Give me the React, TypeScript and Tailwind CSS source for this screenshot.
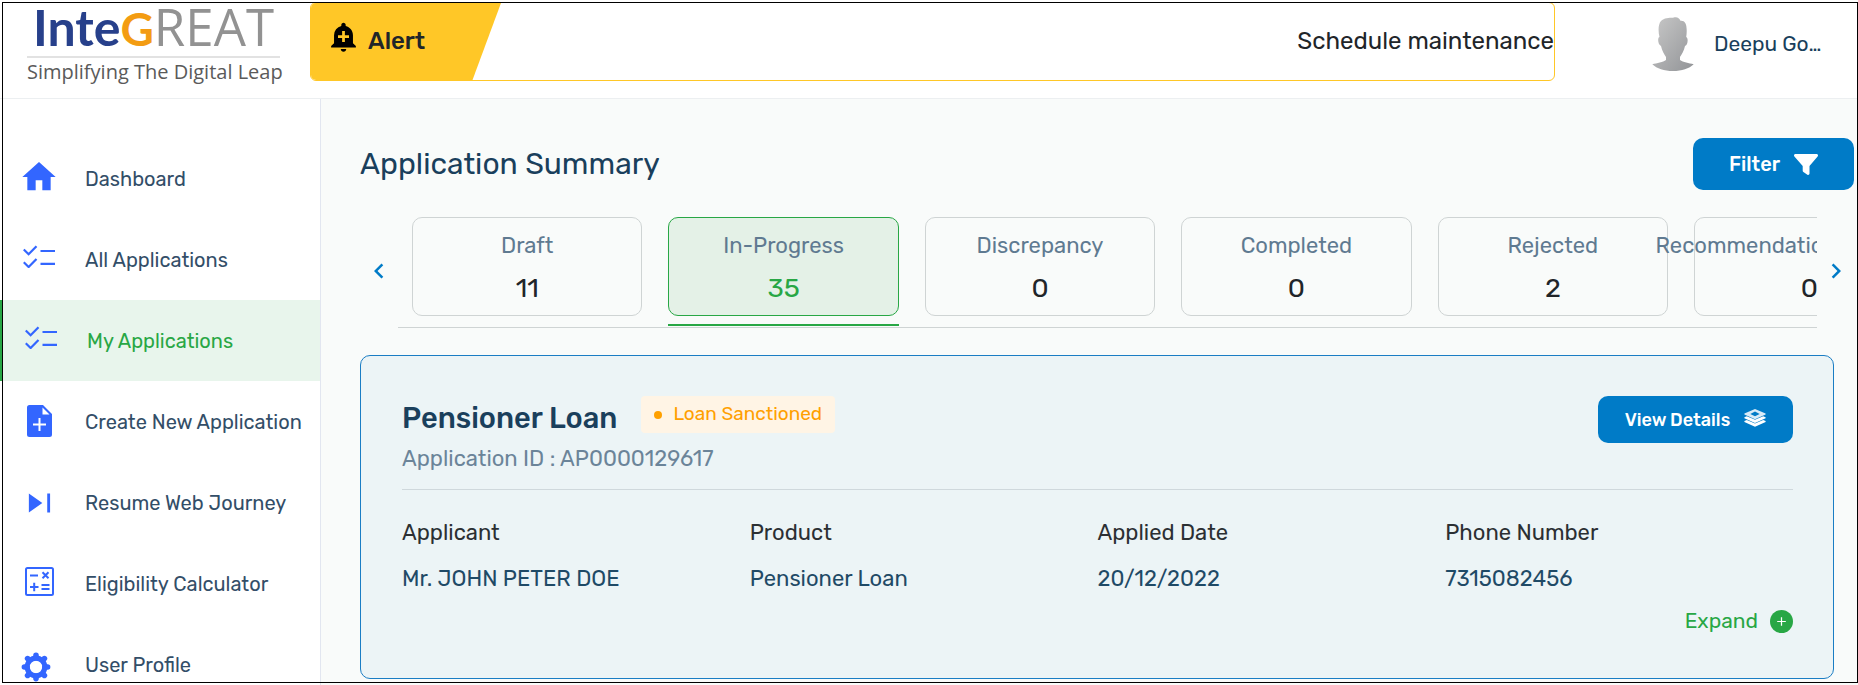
import type { ReactNode } from "react";
import { MdAddAlert, MdChevronLeft, MdChevronRight, MdHome } from "react-icons/md";

function ChecklistIcon() {
  return (
    <svg viewBox="0 0 32 23" className="mb-1.5 h-[23px] w-8" fill="none" stroke="currentColor" strokeWidth="2.2" aria-hidden="true">
      <path d="M.8 4.500L5.600 9.200 13.500 1.200M17.500 6H32M.8 17.300L5.600 22 13.500 14M17.500 18.800H32" />
    </svg>
  );
}

function NewFileIcon() {
  return (
    <svg viewBox="0 0 25 32" className="mb-0.5 h-8 w-[25px]" aria-hidden="true">
      <path fill="currentColor" d="M2.500 0H16l9 9v20.500a2.500 2.500 0 0 1-2.500 2.500h-20A2.500 2.500 0 0 1 0 29.500v-27A2.500 2.500 0 0 1 2.500 0z" />
      <path fill="#fff" d="M15.500 2.500v7H22.500z" />
      <path stroke="#fff" strokeWidth="2" d="M12.500 13v13M6 19.500h13" />
    </svg>
  );
}

function ResumeIcon() {
  return (
    <svg viewBox="0 0 24 24" className="size-[38px]" fill="currentColor" aria-hidden="true">
      <path d="M5.6 18l8.5-6-8.5-6v12zM17.2 6v12h1.800V6z" />
    </svg>
  );
}

function CalculatorIcon() {
  return (
    <svg viewBox="0 0 29 29" className="mb-1 size-[29px]" fill="none" stroke="currentColor" strokeWidth="2" aria-hidden="true">
      <rect x="1" y="1" width="27" height="27" rx="1.500" />
      <path d="M5 8.500h8M17.500 5.300l6 6M23.500 5.300l-6 6M5 20h8.500M9.200 15.800v8.500M16.500 18h8M16.500 22h8" />
    </svg>
  );
}

function GearIcon() {
  return (
    <svg viewBox="-15 -15 30 30" className="mt-1 mr-1.5 size-[30px]" aria-hidden="true">
      <circle r="8.800" fill="none" stroke="currentColor" strokeWidth="5.200" />
      <path
        stroke="currentColor"
        strokeWidth="5.600"
        strokeLinecap="round"
        d="M0-11.600V-9M0 9v2.600M-11.600 0H-9M9 0h2.600M-8.400-8.400l1.600 1.600M8.400-8.400l-1.600 1.600M-8.400 8.400l1.600-1.600M8.400 8.400l-1.600-1.600"
      />
    </svg>
  );
}

function FunnelIcon() {
  return (
    <svg viewBox="0 0 24 21" className="h-[21px] w-6" fill="currentColor" aria-hidden="true">
      <path d="M1.500 0h21c1.300 0 2 1.400 1.100 2.400L15.500 12v7.500c0 1.200-1.200 1.800-2.100 1.200l-4-2.800c-.4-.3-.7-.7-.7-1.200V12L.4 2.400C-.5 1.400.2 0 1.500 0z" />
    </svg>
  );
}

function LayersIcon() {
  return (
    <svg viewBox="0 0 22 18" className="mb-1 h-[18px] w-[22px]" fill="currentColor" aria-hidden="true">
      <path
        fillRule="evenodd"
        opacity=".85"
        d="M11 0l10.6 4.6v1L11 10.2.4 5.6v-1zM11 2.6L6.3 4.9 11 7.2l4.7-2.3z"
      />
      <path d="M.4 8.2l2.4-1 8.2 3.6 8.2-3.6 2.4 1v1L11 13.9.4 9.2z" />
      <path d="M.4 12l2.4-1 8.2 3.6 8.2-3.6 2.4 1v1L11 17.8.4 13z" />
    </svg>
  );
}

function Avatar() {
  return (
    <svg viewBox="0 0 42 54" className="h-[54px] w-[42px]" aria-hidden="true">
      <defs>
        <linearGradient id="avatar" x1="0" y1="0" x2="1" y2="1">
          <stop offset="0" stopColor="#c8c8c8" />
          <stop offset="1" stopColor="#929497" />
        </linearGradient>
      </defs>
      <path
        fill="url(#avatar)"
        d="M7.500 20C6 14 6.200 7 9 4c3-3 8-3.200 12-3.200 4-1.300 6 0 7.500 3 4-.6 6 3 6 7 .4 3 .2 6-.3 9.200 2.300.6 1.800 8-1.200 9C32 34 29.500 37.500 28 40v3c3 2.500 9 3 13.700 4.200C37 51.500 30 54 21 54S5 51.500.3 47.200C5 46 11 45.500 14 43v-3c-1.500-2.500-4-6-5-11-3-1-3.800-8.400-1.500-9z"
      />
    </svg>
  );
}

type NavEntry = { label: string; icon: ReactNode; active?: boolean };

const nav: NavEntry[] = [
  { label: "Dashboard", icon: <MdHome size={40} className="mb-1" /> },
  { label: "All Applications", icon: <ChecklistIcon /> },
  { label: "My Applications", icon: <ChecklistIcon />, active: true },
  { label: "Create New Application", icon: <NewFileIcon /> },
  { label: "Resume Web Journey", icon: <ResumeIcon /> },
  { label: "Eligibility Calculator", icon: <CalculatorIcon /> },
  { label: "User Profile", icon: <GearIcon /> },
];

const tabs = [
  { label: "Draft", count: 11 },
  { label: "In-Progress", count: 35, active: true },
  { label: "Discrepancy", count: 0 },
  { label: "Completed", count: 0 },
  { label: "Rejected", count: 2 },
  { label: "Recommendation In-Progress", count: 0 },
];

const details = [
  { term: "Applicant", value: "Mr. JOHN PETER DOE" },
  { term: "Product", value: "Pensioner Loan" },
  { term: "Applied Date", value: "20/12/2022" },
  { term: "Phone Number", value: "7315082456" },
];

function Header() {
  return (
    <header className="flex h-[99px] shrink-0 items-start border-b border-[#eceff1] bg-white">
      <div className="flex w-[310px] shrink-0 flex-col pl-[27px] font-['Open_Sans',sans-serif]">
        <div className="flex h-[58px] w-[253px] items-baseline border-b-2 border-[#e2e2e2] pt-0.5 pl-[6px] leading-[48px]">
          <span className="font-[Lato,sans-serif] text-[50px] font-bold text-[#27408b]">Inte</span>
          <span className="font-[Lato,sans-serif] text-[46px] font-bold text-[#f39c12]">G</span>
          <span className="text-[51px] text-[#929292]">REAT</span>
        </div>
        <p className="text-xl leading-7 whitespace-nowrap text-[#5a5a5a]">Simplifying The Digital Leap</p>
      </div>
      <div className="mt-0.5 flex h-[79px] min-w-0 flex-1 items-stretch justify-between overflow-hidden rounded-md border border-[#ffc727]">
        <div className="flex w-[190px] items-center bg-[#ffc727] pl-4 text-black [clip-path:polygon(0_0,100%_0,85%_100%,0_100%)]">
          <MdAddAlert size={33} className="mb-2.5" />
          <span className="pb-0.5 pl-2 text-2xl font-medium text-[#212529]">Alert</span>
        </div>
        <p className="self-center pb-0.5 text-2xl text-[#212529]">Schedule maintenance</p>
      </div>
      <div className="flex w-[303px] shrink-0 items-center pt-[17px] pl-[97px] text-[#1a3f5c]">
        <Avatar />
        <span className="pl-[20px] text-[21px]">Deepu Go…</span>
      </div>
    </header>
  );
}

function Sidebar() {
  return (
    <nav className="w-[321px] shrink-0 overflow-hidden border-r border-[#e2e6f0] bg-white pt-[39px]">
      <ul>
        {nav.map((entry) => (
          <li key={entry.label}>
            <a
              href="#"
              aria-current={entry.active ? "page" : undefined}
              className={
                entry.active
                  ? "flex h-[81px] items-center border-l-2 border-[#28a745] bg-[#e8f5ec] pl-[18px] text-[#28a745]"
                  : "flex h-[81px] items-center pl-[18px] text-[#334e68]"
              }
            >
              <span className="flex w-[42px] shrink-0 justify-center text-[#3366ff]">{entry.icon}</span>
              <span className="pl-[25px] text-xl whitespace-nowrap">{entry.label}</span>
            </a>
          </li>
        ))}
      </ul>
    </nav>
  );
}

function StatusTabs() {
  return (
    <div className="flex items-center pr-[3px]">
      <button type="button" aria-label="Previous" className="flex w-[38px] shrink-0 justify-center pb-1 text-[#007bc7]">
        <MdChevronLeft size={30} />
      </button>
      <div className="flex min-w-0 flex-1 gap-[26px] overflow-hidden border-b border-[#cfd4d4] pb-px pl-[14px]">
        {tabs.map((tab) => (
          <div
            key={tab.label}
            className={
              tab.active
                ? "w-[16.4%] shrink-0 border-b-2 border-[#28a745] pb-2"
                : "w-[16.4%] shrink-0 border-b-2 border-transparent pb-2"
            }
          >
            <button
              type="button"
              className={
                tab.active
                  ? "flex h-[99px] w-full flex-col items-center justify-center gap-2 rounded-[10px] border border-[#28a745] bg-[#e4f1e7] pt-0.5 text-[#28a745]"
                  : "flex h-[99px] w-full flex-col items-center justify-center gap-2 rounded-[10px] border border-[#cfd4d4] pt-0.5 text-[#212529]"
              }
            >
              <span className="text-[22px] leading-8 whitespace-nowrap text-[#5f7a91]">{tab.label}</span>
              <span className="text-[27px] leading-9">{tab.count}</span>
            </button>
          </div>
        ))}
      </div>
      <button type="button" aria-label="Next" className="flex w-[38px] shrink-0 justify-center pb-1 text-[#007bc7]">
        <MdChevronRight size={30} />
      </button>
    </div>
  );
}

function ApplicationCard() {
  return (
    <article className="mt-[27px] mr-6 rounded-[10px] border border-[#1a7dc4] bg-[#ecf4f6] pt-10 pr-10 pb-[39px] pl-[41px]">
      <div className="flex items-start justify-between border-b border-[#cfd8dc] pb-3">
        <div>
          <div className="flex items-start">
            <h2 className="pt-0.5 text-[29px] leading-10 font-medium text-[#1a3f5c]">Pensioner Loan</h2>
            <span className="ml-6 flex h-[37px] items-center gap-[11px] rounded bg-[#fff4e5] px-[13px] text-[19px] text-[#ffa000]">
              <span className="size-2 rounded-full bg-[#ffa000]" />
              Loan Sanctioned
            </span>
          </div>
          <p className="pt-[3px] text-[22px] leading-9 text-[#6b8499]">Application ID : AP0000129617</p>
        </div>
        <button
          type="button"
          className="flex h-[47px] w-[195px] items-center justify-center gap-[14px] rounded-[10px] bg-[#007bc7] text-lg font-medium text-white"
        >
          View Details
          <LayersIcon />
        </button>
      </div>
      <dl className="grid grid-cols-4 pt-[23px] text-[22px]">
        {details.map((item) => (
          <div key={item.term} className="leading-10">
            <dt className="text-[#2b2f33]">{item.term}</dt>
            <dd className="pt-1.5 text-[#1f4a66]">{item.value}</dd>
          </div>
        ))}
      </dl>
      <div className="flex justify-end pt-1">
        <button type="button" className="flex items-center gap-3 text-[21px] leading-9 text-[#28a745]">
          Expand
          <svg viewBox="0 0 24 24" className="size-[23px]" aria-hidden="true">
            <circle cx="12" cy="12" r="12" fill="currentColor" />
            <path d="M12 7.500v9M7.500 12h9" stroke="#fff" strokeWidth="1.300" />
          </svg>
        </button>
      </div>
    </article>
  );
}

export default function App() {
  return (
    <div className="relative flex h-screen flex-col overflow-hidden bg-[#f9fbfa] font-[Rubik,Roboto,sans-serif]">
      <Header />
      <div className="flex min-h-0 flex-1">
        <Sidebar />
        <main className="min-w-0 flex-1 pl-[39px]">
          <div className="flex items-start justify-between pt-[39px] pr-1">
            <h1 className="pt-1 text-[30px] leading-[44px] text-[#1a3f5c]">Application Summary</h1>
            <button
              type="button"
              className="flex h-[52px] w-[161px] items-center justify-center gap-[14px] rounded-[10px] bg-[#007bc7] text-xl font-medium text-white"
            >
              Filter
              <FunnelIcon />
            </button>
          </div>
          <div className="pt-[27px]">
            <StatusTabs />
          </div>
          <ApplicationCard />
        </main>
      </div>
      <div className="pointer-events-none absolute inset-y-0.5 right-0 left-0.5 border border-black" />
    </div>
  );
}
